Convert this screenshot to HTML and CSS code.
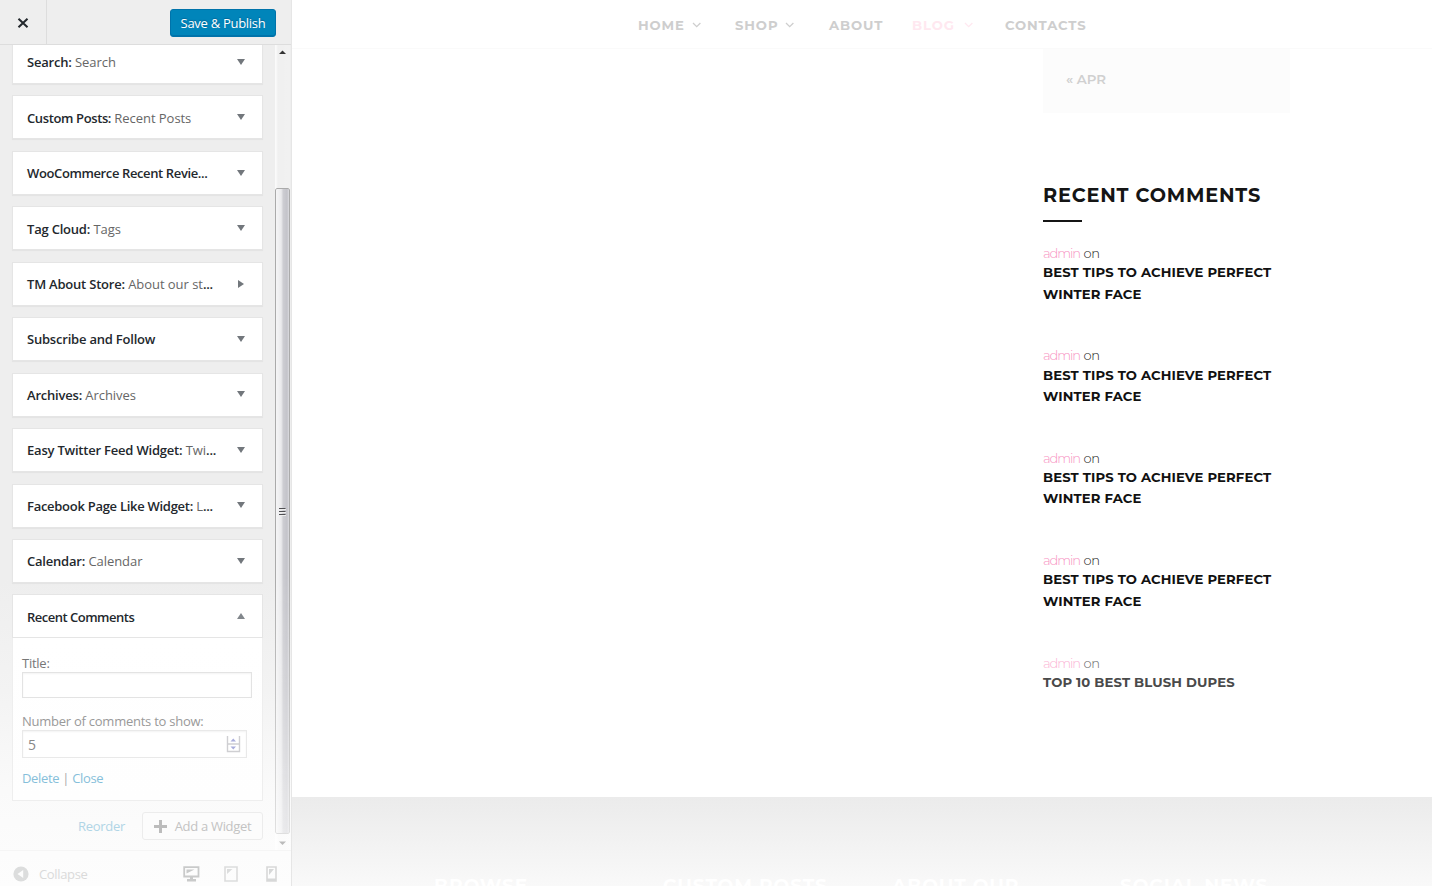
FILE: index.html
```html
<!DOCTYPE html>
<html lang="en">
<head>
<meta charset="utf-8">
<title>Customize</title>
<link rel="stylesheet" href="styles.css">
</head>
<body>
<div class="app">
  <aside class="sidebar">
    <header class="top">
      <button class="close" aria-label="Close"><svg width="12" height="12" viewBox="0 0 12 12"><path d="M1.5 1.7l9 8.6M10.5 1.7l-9 8.6" stroke="#23282d" stroke-width="2" fill="none"/></svg></button>
      <button class="save">Save &amp; Publish</button>
    </header>
    <div class="middle">
      <div class="widgets">
        <div class="card"><p><b>Search:</b> Search</p><i class="down"></i></div>
        <div class="card snug"><p><b>Custom Posts:</b> Recent Posts</p><i class="down"></i></div>
        <div class="card snug"><p><b>WooCommerce Recent Revie...</b></p><i class="down"></i></div>
        <div class="card"><p><b>Tag Cloud:</b> Tags</p><i class="down"></i></div>
        <div class="card"><p><b>TM About Store:</b> About our st<b>...</b></p><i class="right"></i></div>
        <div class="card"><p><b>Subscribe and Follow</b></p><i class="down"></i></div>
        <div class="card"><p><b>Archives:</b> Archives</p><i class="down"></i></div>
        <div class="card"><p><b>Easy Twitter Feed Widget:</b> Twi<b>...</b></p><i class="down"></i></div>
        <div class="card fb"><p><b>Facebook Page Like Widget:</b> L<b>...</b></p><i class="down"></i></div>
        <div class="card"><p><b>Calendar:</b> Calendar</p><i class="down"></i></div>
        <div class="card open"><p><b>Recent Comments</b></p><i class="up"></i></div>
        <div class="form">
          <label class="l1">Title:</label>
          <div class="field f1"></div>
          <label class="l2">Number of comments to show:</label>
          <div class="field f2"><span>5</span>
            <svg width="15" height="17" viewBox="0 0 15 17"><path d="M1.5 0v15.5h12V0M1 8h13" fill="none" stroke="#cfcfd2" stroke-width="1.4"/><path d="M4.5 5.5h5.5L7.3 2.5zM4.5 10.500h5.5L7.3 13.500z" fill="#a9addb"/></svg>
          </div>
          <div class="links"><a>Delete</a> | <a>Close</a></div>
        </div>
        <div class="actions"><a>Reorder</a>
          <button class="add"><svg width="13" height="13" viewBox="0 0 13 13"><path d="M6.500 0v13M0 6.500h13" stroke="#bcbcbc" stroke-width="3"/></svg>Add a Widget</button>
        </div>
      </div>
      <div class="scroll">
        <svg class="arrow" width="7" height="4" viewBox="0 0 7 4"><path d="M0 4L3.500 0.500 7 4z" fill="#333"/></svg>
        <div class="thumb"><svg width="8" height="9" viewBox="0 0 8 9"><path d="M0 1.500h6.500M0 4.500h6.500M0 7.500h6.500" stroke="#505054" stroke-width="1"/><path d="M.5 2.500h6.500M.5 5.500h6.500M.5 8.500h6.500" stroke="#eee" stroke-width="1"/></svg></div>
        <svg class="arrow low" width="7" height="4" viewBox="0 0 7 4"><path d="M0 .5h7L3.500 4z" fill="#bbb"/></svg>
      </div>
    </div>
    <footer class="bottom">
      <svg width="16" height="16" viewBox="0 0 16 16"><circle cx="8" cy="8" r="7.600" fill="#dcdddd"/><path d="M10.200 4v8L4.500 8z" fill="#fcfcfc"/></svg>
      <span>Collapse</span>
      <svg class="desk" width="17" height="16" viewBox="0 0 17 16"><path d="M1.200 1.200h14.300v9.300H1.200z" fill="none" stroke="#c9caca" stroke-width="1.800"/><path d="M3.500 3.500h8l-8 4zM7 11h3v2h3v2.500H4V13h3z" fill="#c9caca"/></svg>
      <svg class="tab" width="14" height="16" viewBox="0 0 14 16"><path d="M1 1h12v14H1z" fill="none" stroke="#dcdddd" stroke-width="1.600"/><path d="M3 3h5.500L3 8z" fill="#dcdddd"/></svg>
      <svg class="phone" width="11" height="16" viewBox="0 0 11 16"><path d="M1 1h9v14H1z" fill="none" stroke="#d7d8d8" stroke-width="1.600"/><path d="M3 3h5L3 9zM1 12.500h9V15H1z" fill="#d7d8d8"/></svg>
    </footer>
  </aside>
  <main class="preview">
    <nav class="nav">
      <a><span>HOME</span><svg width="10" height="6" viewBox="0 0 10 6"><path d="M1 1l3.700 3.600L8.400 1" /></svg></a>
      <a><span>SHOP</span><svg width="10" height="6" viewBox="0 0 10 6"><path d="M1 1l3.700 3.600L8.400 1" /></svg></a>
      <a><span>ABOUT</span></a>
      <a class="on"><span>BLOG</span><svg width="10" height="6" viewBox="0 0 10 6"><path d="M1 1l3.700 3.600L8.400 1" /></svg></a>
      <a><span>CONTACTS</span></a>
    </nav>
    <div class="content">
      <div class="calendar">« APR</div>
      <h2>RECENT COMMENTS</h2>
      <div class="rule"></div>
      <div class="comment"><p><a>admin</a> <span>on</span></p><h3>BEST TIPS TO ACHIEVE PERFECT<br>WINTER FACE</h3></div>
      <div class="comment"><p><a>admin</a> <span>on</span></p><h3>BEST TIPS TO ACHIEVE PERFECT<br>WINTER FACE</h3></div>
      <div class="comment"><p><a>admin</a> <span>on</span></p><h3>BEST TIPS TO ACHIEVE PERFECT<br>WINTER FACE</h3></div>
      <div class="comment"><p><a>admin</a> <span>on</span></p><h3>BEST TIPS TO ACHIEVE PERFECT<br>WINTER FACE</h3></div>
      <div class="comment last"><p><a>admin</a> <span>on</span></p><h3>TOP 10 BEST BLUSH DUPES</h3></div>
    </div>
    <footer class="foot"><h4>BROWSE</h4><h4>CUSTOM POSTS</h4><h4>ABOUT OUR</h4><h4>SOCIAL NEWS</h4></footer>
  </main>
</div>
</body>
</html>
```
FILE: styles.css
```css
* { box-sizing: border-box; }
body { margin: 0; background: #fff; font-family: "Open Sans", sans-serif; font-size: 13px; }
p, h2, h3, h4 { margin: 0; }
button { font: inherit; margin: 0; padding: 0; border: 0; background: none; }
svg { display: block; flex: none; }
.app { display: flex; width: 1433px; height: 886px; overflow: hidden; }

.sidebar { width: 292px; flex: none; display: flex; flex-direction: column; border-right: 1px solid #e6e6e6; background: linear-gradient(#eee 0, #eee 580px, #f3f3f3 690px, #fafafa 790px, #fdfdfd 886px); }
.top { height: 45px; flex: none; display: flex; justify-content: space-between; border-bottom: 1px solid #ddd; padding-right: 15px; }
.close { width: 47px; display: flex; align-items: center; justify-content: center; border-right: 1px solid #ddd; padding-top: 2px; }
.save { width: 106px; height: 28px; margin-top: 9px; border: 1px solid #0073aa; border-radius: 3px; background: #0085ba; color: #fff; line-height: 24px; letter-spacing: -.28px; box-shadow: inset 0 -1px #0073aa; text-shadow: 0 -1px 1px #006799; }
.middle { flex: none; height: 805px; display: flex; overflow: hidden; }
.widgets { width: 263px; flex: none; padding-left: 12px; margin-top: -5px; }
.card { height: 44px; margin-bottom: 11.45px; background: #fff; border: 1px solid #e5e5e5; box-shadow: 0 1px 1px rgba(0,0,0,.04); display: flex; align-items: center; justify-content: space-between; padding: .5px 17px 0 14px; color: #666; white-space: nowrap; }
.card b { font-weight: 600; color: #23282d; letter-spacing: -.21px; }
.card.snug b { letter-spacing: -.38px; }
.card.fb b { letter-spacing: -.28px; }
.card p { letter-spacing: -.05px; }
.card i { width: 0; height: 0; border: 4px solid transparent; margin-top: -1px; }
.card .down { border-top: 6px solid #72777c; border-bottom: 0; }
.card .up { border-bottom: 6px solid #82878c; border-top: 0; }
.card .right { border-left: 6px solid #72777c; border-right: 0; margin-right: 1px; }
.card.open { margin-bottom: 0; box-shadow: none; }
.card.open b { letter-spacing: -.5px; }
.form { height: 163px; background: linear-gradient(#fff, #fefefe); border: 1px solid #eee; border-top: 0; padding: 15px 10px 0 9px; display: flex; flex-direction: column; align-items: flex-start; line-height: 20px; letter-spacing: -.25px; }
.l1 { color: #777; }
.l2 { color: #999; margin-top: 13px; }
.field { border: 1px solid #e3e3e3; background: #fff; box-shadow: inset 0 1px 2px rgba(0,0,0,.05); }
.f1 { width: 230px; height: 26px; margin-top: -1px; }
.f2 { width: 225px; height: 28px; margin-top: -1px; display: flex; align-items: center; justify-content: space-between; padding: 1px 5px 0 5px; color: #888; font-size: 14px; border-color: #e9e9e9; }
.links { color: #aaa; margin-top: 10px; letter-spacing: -.33px; }
.links a { color: #86bfda; }
.actions { display: flex; justify-content: flex-end; align-items: center; gap: 17px; margin-top: 11px; color: #b0d5e6; letter-spacing: -.3px; }
.add { width: 121px; height: 28px; border: 1px solid #ececec; border-radius: 3px; color: #c3c3c3; background: #fcfcfc; display: flex; align-items: center; justify-content: center; gap: 8px; letter-spacing: -.3px; }
.scroll { width: 15px; margin-left: 12px; flex: none; display: flex; flex-direction: column; align-items: center; background: linear-gradient(90deg, rgba(255,255,255,.7) 1px, rgba(255,255,255,.1) 3px, rgba(255,255,255,.2)); }
.arrow { margin-top: 5px; }
.thumb { width: 15px; height: 646px; margin-top: 134px; border: 1px solid #aaa; border-radius: 2px; background: linear-gradient(90deg, #f5f5f6 0, #eaeaec 40%, #cdcdd2 55%, #c3c3c9 85%, #dcdce0); display: flex; align-items: center; justify-content: center; -webkit-mask-image: linear-gradient(#000 60%, rgba(0,0,0,.35)); }
.low { margin-top: 7px; }
.bottom { height: 36px; border-top: 1px solid #f5f5f5; display: flex; align-items: center; padding: 10px 0 0 13px; color: #dadada; letter-spacing: -.35px; }
.bottom span { margin-left: 10px; width: 144px; }
.tab { margin-left: 24px; }
.phone { margin-left: 28px; }

.preview { width: 1141px; flex: none; display: flex; flex-direction: column; background: #fff; font-family: Montserrat, Inter, sans-serif; border-right: 1px solid #fff; }
.nav { height: 49px; flex: none; display: grid; grid-template-columns: 97px 94px 83px 93px 90px; padding: 2px 0 0 346px; border-bottom: 1px solid #fafafa; font-size: 13.2px; font-weight: 700; letter-spacing: .9px; color: #cecece; }
.nav a { display: flex; align-items: center; gap: 7px; }
.nav path { fill: none; stroke: currentColor; stroke-width: 1.300; }
.nav .on { color: #ffe8f0; gap: 9px; }
.content { height: 748px; flex: none; padding-left: 751px; color: #111; }
.calendar { width: 247px; height: 64px; background: #fcfcfc; padding: 20px 0 0 23px; font-size: 13.3px; line-height: 20px; font-weight: 600; color: #d0d0d0; }
.content h2 { margin-top: 68px; font-size: 19.3px; line-height: 28px; font-weight: 700; letter-spacing: .8px; white-space: nowrap; color: #151515; }
.rule { width: 39px; height: 2px; background: #151515; margin: 11px 0 21px; }
.comment { height: 102.250px; white-space: nowrap; }
.comment p { font-size: 13px; line-height: 20px; font-weight: 300; color: #222; letter-spacing: -1.100px; word-spacing: 1.500px; }
.comment p a { color: #f792c2; }
.comment p span { letter-spacing: -.5px; }
.comment h3 { font-size: 13.2px; line-height: 21.500px; font-weight: 700; margin-top: -.6px; letter-spacing: .13px; }
.last { height: 50px; color: #4a4a4a; padding-top: .5px; }
.last p { color: #666; }
.last p a { color: #fbb3d4; }
.foot { flex: 1; display: grid; grid-template-columns: 229px 229px 228px 200px; padding: 76px 0 0 142px; background: linear-gradient(#ebebeb, #f9f9f9); overflow: hidden; color: #fff; }
.foot h4 { font-size: 18.6px; line-height: 26px; font-weight: 700; letter-spacing: .9px; white-space: nowrap; }
```
